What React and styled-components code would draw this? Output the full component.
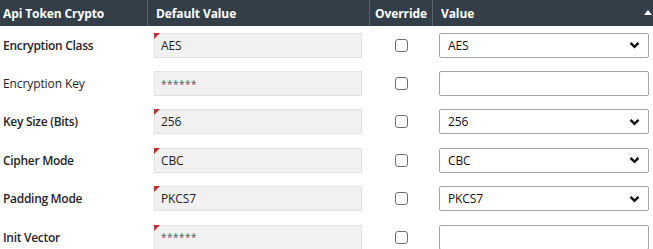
import React from 'react';
import styled, { createGlobalStyle } from 'styled-components';

const GlobalStyle = createGlobalStyle`
  body {
    margin: 0;
    background: #fff;
    font-family: 'Open Sans', 'Noto Sans', sans-serif;
  }
`;

const rows = [
  { label: 'Encryption Class', value: 'AES', select: true, bold: true, flagged: true },
  { label: 'Encryption Key', value: '******', select: false, bold: false, flagged: false },
  { label: 'Key Size (Bits)', value: '256', select: true, bold: true, flagged: true },
  { label: 'Cipher Mode', value: 'CBC', select: true, bold: true, flagged: true },
  { label: 'Padding Mode', value: 'PKCS7', select: true, bold: true, flagged: true },
  { label: 'Init Vector', value: '******', select: false, bold: true, flagged: true },
];

const Grid = styled.div`
  display: grid;
  grid-template-columns: 147px 222px 63px 1fr;
  width: 653px;
`;

const HeadCell = styled.div`
  position: relative;
  height: 26px;
  display: flex;
  align-items: center;
  justify-content: ${p => (p.center ? 'center' : 'flex-start')};
  padding: 0 ${p => (p.first ? '3px' : '8px')};
  background: #343e48;
  color: #fff;
  font-size: 12px;
  font-weight: 700;
  letter-spacing: -0.1px;
  border-left: ${p => (p.first ? 'none' : '1px solid #5b656f')};
  box-sizing: border-box;
  white-space: nowrap;
`;

const SortArrow = styled.span`
  position: absolute;
  right: 4px;
  top: 10px;
  width: 0;
  height: 0;
  border-left: 4px solid transparent;
  border-right: 4px solid transparent;
  border-bottom: 5px solid #fff;
`;

const Cell = styled.div`
  height: 38.4px;
  display: flex;
  align-items: center;
  justify-content: ${p => (p.center ? 'center' : 'flex-start')};
  padding: ${p => p.pad || '0 7px'};
  box-sizing: border-box;
`;

const Label = styled.span`
  font-size: 12px;
  font-weight: ${p => (p.bold ? 600 : 400)};
  letter-spacing: ${p => (p.bold ? '-0.3px' : '-0.1px')};
  color: #1f2328;
  white-space: nowrap;
`;

const DefaultBox = styled.div`
  position: relative;
  width: 208px;
  height: 25px;
  display: flex;
  align-items: center;
  padding-left: 6px;
  box-sizing: border-box;
  background: #f1f1f1;
  border: 1px solid #e2e2e2;
  font-size: ${p => (p.masked ? '10px' : '12px')};
  color: ${p => (p.masked ? '#555' : '#222')};
  letter-spacing: ${p => (p.masked ? '0.5px' : '-0.1px')};
`;

const Flag = styled.span`
  position: absolute;
  left: -1px;
  top: -1px;
  width: 0;
  height: 0;
  border-top: 6px solid #c0302a;
  border-right: 6px solid transparent;
`;

const Check = styled.span`
  width: 13px;
  height: 13px;
  box-sizing: border-box;
  border: 1px solid #6f6f6f;
  border-radius: 3px;
  background: #fff;
  margin-left: 1px;
`;

const Field = styled.div`
  width: 210px;
  height: 25px;
  display: flex;
  align-items: center;
  justify-content: space-between;
  padding: 0 8px 0 8px;
  box-sizing: border-box;
  border: 1px solid #a5a5a5;
  border-radius: 2px;
  background: #fff;
  font-size: 12px;
  letter-spacing: -0.1px;
  color: #111;
`;

const Chevron = () => (
  <svg width="11" height="8" viewBox="0 0 11 8">
    <path d="M1.5 1.8 L5.5 5.8 L9.5 1.8" fill="none" stroke="#111" strokeWidth="2.4" />
  </svg>
);

export default function App() {
  return (
    <>
      <GlobalStyle />
      <Grid>
        <HeadCell first>Api Token Crypto</HeadCell>
        <HeadCell>Default Value</HeadCell>
        <HeadCell center>Override</HeadCell>
        <HeadCell>
          Value
          <SortArrow />
        </HeadCell>
        {rows.map(r => (
          <React.Fragment key={r.label}>
            <Cell pad="0 3px">
              <Label bold={r.bold}>{r.label}</Label>
            </Cell>
            <Cell>
              <DefaultBox masked={r.value === '******'}>
                {r.flagged && <Flag />}
                {r.value}
              </DefaultBox>
            </Cell>
            <Cell center>
              <Check />
            </Cell>
            <Cell>
              <Field>
                {r.select ? r.value : ''}
                {r.select && <Chevron />}
              </Field>
            </Cell>
          </React.Fragment>
        ))}
      </Grid>
    </>
  );
}
